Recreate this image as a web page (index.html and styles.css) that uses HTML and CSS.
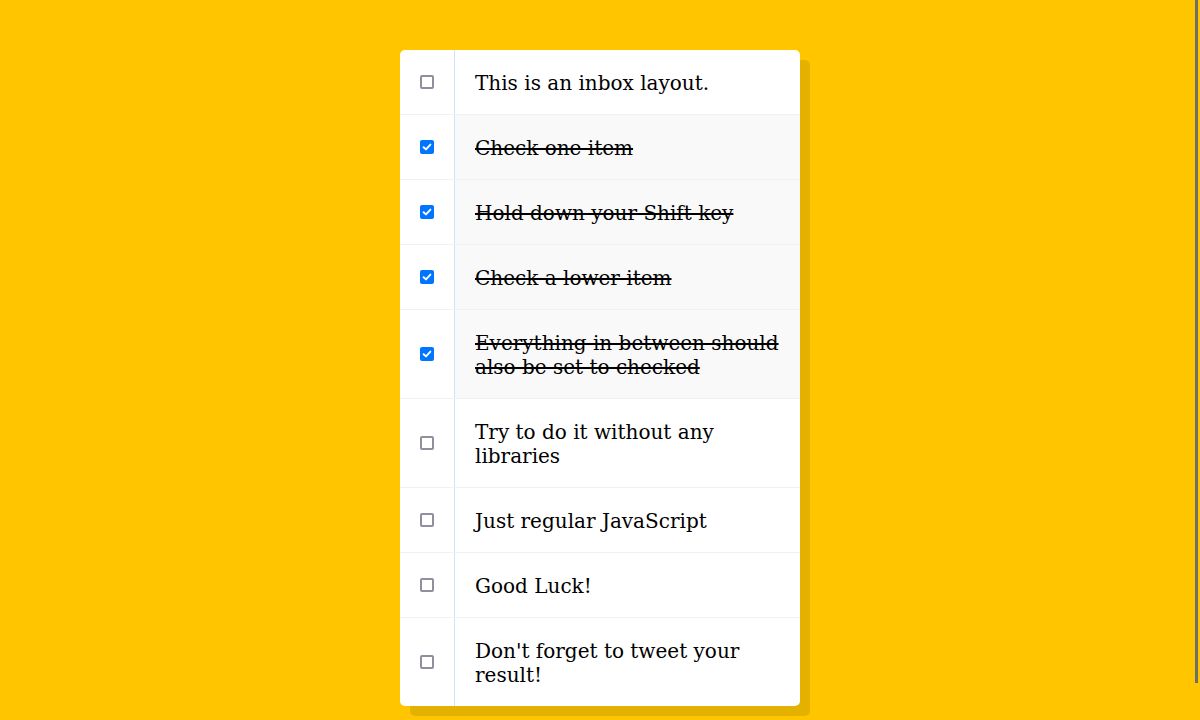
FILE: index.html
```html
<!DOCTYPE html>
<html>
<head>
<meta charset="utf-8">
<title>Hold Shift to Check Multiple Checkboxes</title>
<link rel="stylesheet" href="styles.css">
</head>
<body>
<div class="inbox">
  <div class="item"><input type="checkbox"><p>This is an inbox layout.</p></div>
  <div class="item"><input type="checkbox" checked><p>Check one item</p></div>
  <div class="item"><input type="checkbox" checked><p>Hold down your Shift key</p></div>
  <div class="item"><input type="checkbox" checked><p>Check a lower item</p></div>
  <div class="item"><input type="checkbox" checked><p>Everything in between should also be set to checked</p></div>
  <div class="item"><input type="checkbox"><p>Try to do it without any libraries</p></div>
  <div class="item"><input type="checkbox"><p>Just regular JavaScript</p></div>
  <div class="item"><input type="checkbox"><p>Good Luck!</p></div>
  <div class="item"><input type="checkbox"><p>Don't forget to tweet your result!</p></div>
</div>
<div class="scroll-thumb"></div>
</body>
</html>
```
FILE: styles.css
```css
html {
  font-family: "DejaVu Sans", sans-serif;
  background: #ffc600;
}

body {
  margin: 0;
  padding: 50px 0;
}

.inbox {
  max-width: 400px;
  margin: 0 auto;
  background: white;
  border-radius: 5px;
  box-shadow: 10px 10px 0 rgba(0, 0, 0, 0.1);
}

.item {
  display: flex;
  align-items: center;
  border-bottom: 1px solid #f1f1f1;
}

.item:last-child {
  border-bottom: 0;
}

.item input[type="checkbox"] {
  appearance: none;
  -webkit-appearance: none;
  box-sizing: border-box;
  width: 14px;
  height: 14px;
  margin: 20px;
  border: 2px solid #8f8f9d;
  border-radius: 2px;
  background: #fff;
  flex: none;
}

.item input[type="checkbox"]:checked {
  border-color: #0075ff;
  background: #0075ff url("data:image/svg+xml,%3Csvg xmlns='http://www.w3.org/2000/svg' viewBox='0 0 10 10'%3E%3Cpath d='M1.6 5.2 L4 7.4 L8.4 2.6' fill='none' stroke='white' stroke-width='1.9' stroke-linecap='round' stroke-linejoin='round'/%3E%3C/svg%3E") center / 10px 10px no-repeat;
}

.item p {
  margin: 0;
  padding: 21px 20px 19px;
  flex: 1;
  font-family: "DejaVu Serif", serif;
  font-size: 20px;
  font-weight: 200;
  border-left: 1px solid #d1e2ff;
}

.item input:checked + p {
  background: #f9f9f9;
  text-decoration: line-through;
}

.scroll-thumb {
  position: fixed;
  top: 0;
  right: 2px;
  width: 3px;
  height: 683px;
  background: #6f6f6a;
}
```
